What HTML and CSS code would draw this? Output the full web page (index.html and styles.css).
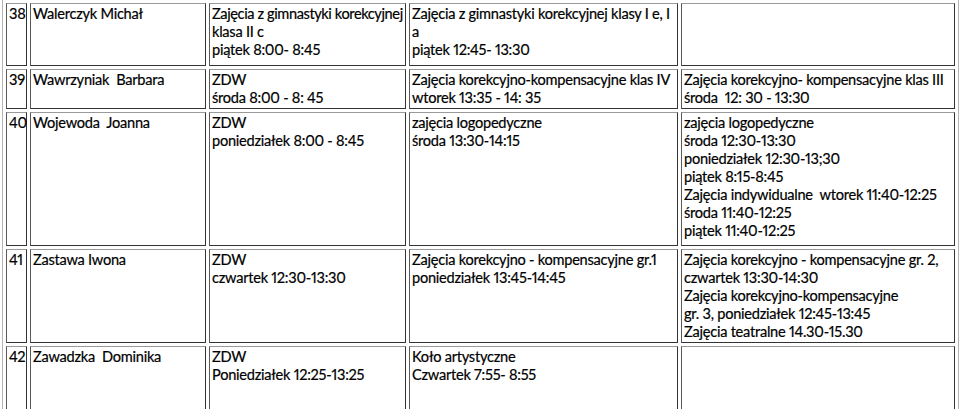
FILE: index.html
```html
<!DOCTYPE html>
<html lang="pl">
<head>
<meta charset="utf-8">
<title>Zajęcia</title>
<link rel="stylesheet" href="styles.css">
</head>
<body>
<table class="grid">
  <colgroup>
    <col class="c1"><col class="c2"><col class="c3"><col class="c4"><col class="c5">
  </colgroup>
  <tr class="r38">
    <td>38</td>
    <td>Walerczyk Michał</td>
    <td><span class="tight">Zajęcia z gimnastyki korekcyjnej</span><br>klasa II c<br>piątek 8:00- 8:45</td>
    <td>Zajęcia z gimnastyki korekcyjnej klasy I e, I<br>a<br>piątek 12:45- 13:30</td>
    <td></td>
  </tr>
  <tr class="r39">
    <td>39</td>
    <td>Wawrzyniak&nbsp; Barbara</td>
    <td>ZDW<br>środa 8:00 - 8: 45</td>
    <td>Zajęcia korekcyjno-kompensacyjne klas IV<br>wtorek 13:35 - 14: 35</td>
    <td>Zajęcia korekcyjno- kompensacyjne klas III<br>środa&nbsp; 12: 30 - 13:30</td>
  </tr>
  <tr class="r40">
    <td>40</td>
    <td>Wojewoda&nbsp; Joanna</td>
    <td>ZDW<br>poniedziałek 8:00 - 8:45</td>
    <td>zajęcia logopedyczne<br>środa 13:30-14:15</td>
    <td>zajęcia logopedyczne<br>środa 12:30-13:30<br>poniedziałek 12:30-13;30<br>piątek 8:15-8:45<br>Zajęcia indywidualne&nbsp; wtorek 11:40-12:25<br>środa 11:40-12:25<br>piątek 11:40-12:25</td>
  </tr>
  <tr class="r41">
    <td>41</td>
    <td>Zastawa Iwona</td>
    <td>ZDW<br>czwartek 12:30-13:30</td>
    <td>Zajęcia korekcyjno - kompensacyjne gr.1<br>poniedziałek 13:45-14:45</td>
    <td>Zajęcia korekcyjno - kompensacyjne gr. 2,<br>czwartek 13:30-14:30<br>Zajęcia korekcyjno-kompensacyjne<br>gr. 3, poniedziałek 12:45-13:45<br>Zajęcia teatralne 14.30-15.30</td>
  </tr>
  <tr class="r42">
    <td>42</td>
    <td>Zawadzka&nbsp; Dominika</td>
    <td>ZDW<br>Poniedziałek 12:25-13:25</td>
    <td>Koło artystyczne<br>Czwartek 7:55- 8:55</td>
    <td></td>
  </tr>
</table>
</body>
</html>
```
FILE: styles.css
```css
html, body {
  margin: 0;
  padding: 0;
  background: #ffffff;
}
body {
  font-family: "Lato", "Liberation Sans", sans-serif;
  font-size: 14.6px;
  line-height: 18px;
  color: #000000;
  font-variant-numeric: proportional-nums;
  letter-spacing: -0.25px;
  -webkit-text-stroke: 0.2px #000000;
  overflow: hidden;
}
.tight {
  letter-spacing: -0.4px;
}
.grid {
  table-layout: fixed;
  border-collapse: separate;
  border-spacing: 3px;
  border: 1px solid #b4b4b4;
  margin: -1px 0 0 2px;
  width: 957px;
}
.c1 { width: 21px; }
.c2 { width: 176px; }
.c3 { width: 197px; }
.c4 { width: 269px; }
.c5 { width: 274px; }
.grid td {
  vertical-align: top;
  padding: 1px 0 1px 2px;
  white-space: nowrap;
  border: 1px solid #333333;
  border-top-color: #9a9a9a;
  border-left-color: #5a5a5a;
}
.r38 { height: 63px; }
.r39 { height: 40px; }
.r40 { height: 134px; }
.r41 { height: 93px; }
.r42 { height: 65px; }
```
